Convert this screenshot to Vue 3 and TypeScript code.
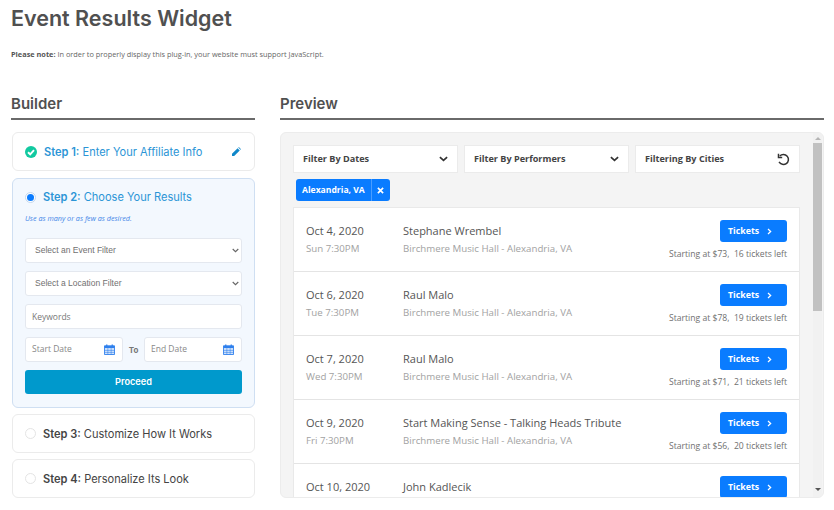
<script setup lang="ts">
interface EventRow { date: string; time?: string; name: string; venue?: string; price?: string }
const events: EventRow[] = [
  { date: 'Oct 4, 2020', time: 'Sun 7:30PM', name: 'Stephane Wrembel', venue: 'Birchmere Music Hall - Alexandria, VA', price: 'Starting at $73,  16 tickets left' },
  { date: 'Oct 6, 2020', time: 'Tue 7:30PM', name: 'Raul Malo', venue: 'Birchmere Music Hall - Alexandria, VA', price: 'Starting at $78,  19 tickets left' },
  { date: 'Oct 7, 2020', time: 'Wed 7:30PM', name: 'Raul Malo', venue: 'Birchmere Music Hall - Alexandria, VA', price: 'Starting at $71,  21 tickets left' },
  { date: 'Oct 9, 2020', time: 'Fri 7:30PM', name: 'Start Making Sense - Talking Heads Tribute', venue: 'Birchmere Music Hall - Alexandria, VA', price: 'Starting at $56,  20 tickets left' },
  { date: 'Oct 10, 2020', name: 'John Kadlecik' },
]
</script>

<template>
  <div class="page">
    <h1>Event Results Widget</h1>
    <p class="note"><b>Please note:</b> In order to properly display this plug-in, your website must support JavaScript.</p>
    <div class="cols">
      <section class="builder">
        <h2>Builder</h2>
        <div class="step">
          <svg class="ico" viewBox="0 0 12 12" width="12" height="12"><circle cx="6" cy="6" r="6" fill="#12c9a0"/><path d="M3 6.2 5.2 8.3 9 4.2" fill="none" stroke="#fff" stroke-width="1.9"/></svg>
          <span class="label blue"><b>Step 1:</b> Enter Your Affiliate Info</span>
          <svg class="pencil" viewBox="0 0 10 10" width="9" height="9"><path d="M0 10V7.6L6.2 1.4 8.6 3.8 2.4 10ZM7 .6 7.6 0 10 2.4 9.4 3Z" fill="#0f87c9"/></svg>
        </div>
        <div class="step active">
          <div class="head">
            <span class="radio on"><i></i></span>
            <span class="label blue"><b>Step 2:</b> Choose Your Results</span>
          </div>
          <p class="hint">Use as many or as few as desired.</p>
          <div class="selwrap">
            <select class="field sel"><option>Select an Event Filter</option></select>
            <svg class="caret" viewBox="0 0 8 5" width="7" height="5"><path d="M.8.8 4 3.8 7.2.8" fill="none" stroke="#666" stroke-width="1.3"/></svg>
          </div>
          <div class="selwrap">
            <select class="field sel"><option>Select a Location Filter</option></select>
            <svg class="caret" viewBox="0 0 8 5" width="7" height="5"><path d="M.8.8 4 3.8 7.2.8" fill="none" stroke="#666" stroke-width="1.3"/></svg>
          </div>
          <input class="field txt" placeholder="Keywords" />
          <div class="dates">
            <div class="field date"><span>Start Date</span>
              <svg viewBox="0 0 12 12" width="11" height="11"><path d="M.5 2h11v9.5H.5Z" fill="#cfe2fb" stroke="#2f80ed"/><path d="M.5 2h11v2.4H.5Z" fill="#2f80ed"/><path d="M3 .5v2M9 .5v2" stroke="#2f80ed" stroke-width="1.4"/><path d="M4.2 4.5v7M7.8 4.5v7M.5 7h11M.5 9.2h11" stroke="#2f80ed" stroke-width=".6"/></svg>
            </div>
            <b class="to">To</b>
            <div class="field date"><span>End Date</span>
              <svg viewBox="0 0 12 12" width="11" height="11"><path d="M.5 2h11v9.5H.5Z" fill="#cfe2fb" stroke="#2f80ed"/><path d="M.5 2h11v2.4H.5Z" fill="#2f80ed"/><path d="M3 .5v2M9 .5v2" stroke="#2f80ed" stroke-width="1.4"/><path d="M4.2 4.5v7M7.8 4.5v7M.5 7h11M.5 9.2h11" stroke="#2f80ed" stroke-width=".6"/></svg>
            </div>
          </div>
          <button class="proceed">Proceed</button>
        </div>
        <div class="step">
          <span class="radio"></span>
          <span class="label"><b>Step 3:</b> Customize How It Works</span>
        </div>
        <div class="step">
          <span class="radio"></span>
          <span class="label"><b>Step 4:</b> Personalize Its Look</span>
        </div>
      </section>
      <section class="preview">
        <h2>Preview</h2>
        <div class="panel">
          <div class="content">
            <div class="filters">
              <div class="filter">Filter By Dates
                <svg viewBox="0 0 10 6" width="9" height="6"><path d="M1 1 5 4.6 9 1" fill="none" stroke="#333" stroke-width="1.9"/></svg>
              </div>
              <div class="filter">Filter By Performers
                <svg viewBox="0 0 10 6" width="9" height="6"><path d="M1 1 5 4.6 9 1" fill="none" stroke="#333" stroke-width="1.9"/></svg>
              </div>
              <div class="filter">Filtering By Cities
                <svg viewBox="0 0 14 14" width="13" height="13"><path d="M3 3.2A5.4 5.4 0 1 1 2.2 9.6" fill="none" stroke="#333" stroke-width="1.6"/><path d="M1.6 .8V4.8H5.6" fill="none" stroke="#333" stroke-width="1.6"/></svg>
              </div>
            </div>
            <div class="pill"><span class="city">Alexandria, VA</span><span class="x">
              <svg viewBox="0 0 8 8" width="7" height="7"><path d="M1 1 7 7M7 1 1 7" stroke="#fff" stroke-width="1.9"/></svg></span></div>
            <div class="list">
              <div v-for="e in events" :key="e.date" class="row">
                <div class="when"><div class="d">{{ e.date }}</div><div v-if="e.time" class="t">{{ e.time }}</div></div>
                <div class="what"><div class="d">{{ e.name }}</div><div v-if="e.venue" class="t v">{{ e.venue }}</div></div>
                <div class="buy">
                  <button class="tickets">Tickets
                    <svg viewBox="0 0 6 8" width="5" height="7"><path d="M1.2 1 4.4 4 1.2 7" fill="none" stroke="#fff" stroke-width="1.5"/></svg>
                  </button>
                  <div v-if="e.price" class="price">{{ e.price }}</div>
                </div>
              </div>
            </div>
          </div>
          <div class="scrollbar">
            <span class="arrow up"></span>
            <span class="thumb"></span>
            <span class="arrow down"></span>
          </div>
        </div>
      </section>
    </div>
  </div>
</template>

<style>
html, body { background: #fff; }
</style>

<style scoped>
.page { width: 834px; height: 510px; overflow: hidden; box-sizing: border-box; padding: 4px 10px 0 11px; font-family: "Open Sans", "Noto Sans", sans-serif; color: #555; }
h1 { margin: 0; font: 600 21.5px/28px Inter, sans-serif; color: #505050; }
.note { margin: 17px 0 0; font: 400 7.35px/10px "Open Sans", sans-serif; color: #666; }
.note b { font-weight: 700; color: #555; }
.cols { display: flex; gap: 25px; margin-top: 34px; }
h2 { margin: 0; padding-bottom: 4px; border-bottom: 2px solid #6a6a6a; font: 600 15px/21px Inter, sans-serif; color: #505050; }
.builder { width: 244px; flex: none; }
.preview { flex: 1; min-width: 0; }
.builder h2 { margin-bottom: 12px; }
.preview h2 { margin-bottom: 12px; }
.step { box-sizing: border-box; height: 39px; margin: 0 0 6px 1px; padding: 0 13px 0 12px; display: flex; align-items: center; gap: 6px; border: 1px solid #ebebeb; border-radius: 6px; background: #fff; }
.step:nth-of-type(1) { margin-bottom: 7px; }
.label { font: 400 11.05px/14px Inter, sans-serif; color: #444; flex: 1; }
.label b { font-weight: 600; }
.label.blue { color: #2b95d6; }
.ico { flex: none; margin-right: 1px; }
.radio { box-sizing: border-box; width: 11px; height: 11px; flex: none; margin-right: 1px; border: 1px solid #e4e4e4; border-radius: 50%; background: #fff; display: flex; align-items: center; justify-content: center; }
.radio i { width: 7px; height: 7px; border-radius: 50%; background: #0a7cff; }
.radio.on { border-color: #c4d8ee; }
.step.active { display: block; height: 230px; margin-bottom: 6px; padding: 11px 12px 0; border-color: #cfdff2; background: #f3f8fe; }
.head { display: flex; align-items: center; gap: 6px; }
.hint { margin: 9px 0 14px; font: italic 400 7.2px/11px "Open Sans", sans-serif; color: #3f86e8; }
.field { box-sizing: border-box; display: block; width: 100%; height: 25px; border: 1px solid #e4e8ef; border-radius: 3px; background: #fff; font: 400 8.5px/1 "Liberation Sans", sans-serif; color: #707070; outline: none; }
.selwrap { position: relative; margin-bottom: 8px; }
.sel { padding: 0 9px; appearance: none; }
.caret { position: absolute; right: 3px; top: 10px; }
.txt { padding: 0 6px; font-family: "Open Sans", sans-serif; }
.txt::placeholder { color: #777; opacity: 1; }
.dates { display: flex; align-items: center; margin-top: 8px; }
.date { flex: 1; display: flex; align-items: center; justify-content: space-between; padding: 0 7px 0 6px; color: #888; font-family: "Open Sans", sans-serif; min-width: 0; }
.to { width: 21px; text-align: center; flex: none; font: 700 8px/1 Inter, sans-serif; color: #777; }
.proceed { display: block; width: 100%; height: 24px; margin-top: 8px; border: 0; border-radius: 3px; background: #0099cc; color: #fff; font: 600 9.2px/24px Inter, sans-serif; padding: 0; }
.panel { height: 366px; display: flex; box-sizing: border-box; border: 1px solid #ececec; border-radius: 6px; background: #f4f4f4; overflow: hidden; }
.content { width: 520px; flex: none; padding: 12px 0 0 12px; box-sizing: content-box; }
.filters { display: flex; gap: 6px; width: 507px; }
.filter { box-sizing: border-box; flex: 1; height: 28px; display: flex; align-items: center; justify-content: space-between; padding: 0 9px; background: #fff; border: 1px solid #ebebeb; font: 700 9.1px/1 "Open Sans", sans-serif; color: #444; }
.pill { display: inline-flex; height: 22px; margin: 6px 0 0 3px; border-radius: 3px; overflow: hidden; background: #0a7cff; color: #fff; vertical-align: top; }
.city { padding: 0 6px; font: 700 8.6px/22px "Open Sans", sans-serif; }
.x { width: 18px; display: flex; align-items: center; justify-content: center; border-left: 1px solid #4a9dff; }
.list { width: 507px; margin-top: 6px; background: #fff; border: 1px solid #e9e9e9; box-sizing: border-box; }
.row { height: 64px; box-sizing: border-box; display: flex; padding: 12px 12px 0; border-bottom: 1px solid #e4e4e4; }
.when { width: 97px; flex: none; }
.what { flex: 1; min-width: 0; }
.d { font: 400 11px/14px "Open Sans", sans-serif; color: #555; margin-top: 4px; }
.t { font: 400 9.7px/14px "Open Sans", sans-serif; color: #a2a2a2; margin-top: 4px; }
.buy { width: 140px; flex: none; display: flex; flex-direction: column; align-items: flex-end; }
.tickets { box-sizing: border-box; width: 67px; height: 22px; display: flex; align-items: center; gap: 8px; padding: 0 8px; border: 0; border-radius: 3px; background: #0a7cff; color: #fff; font: 700 8.8px/1 "Open Sans", sans-serif; }
.price { margin-top: 6px; font: 400 8.6px/12px "Open Sans", sans-serif; color: #707070; white-space: pre; }
.scrollbar { width: 10px; margin: 0 1px 0 auto; display: flex; flex-direction: column; align-items: center; background: #f1f1f1; }
.arrow { width: 0; height: 0; border-left: 3px solid transparent; border-right: 3px solid transparent; flex: none; }
.arrow.up { margin: 4px 0 3px; border-bottom: 3px solid #b5b5b5; }
.arrow.down { margin: auto 0 6px; border-top: 3px solid #555; }
.thumb { width: 9px; height: 168px; background: #c1c1c1; flex: none; }
</style>
